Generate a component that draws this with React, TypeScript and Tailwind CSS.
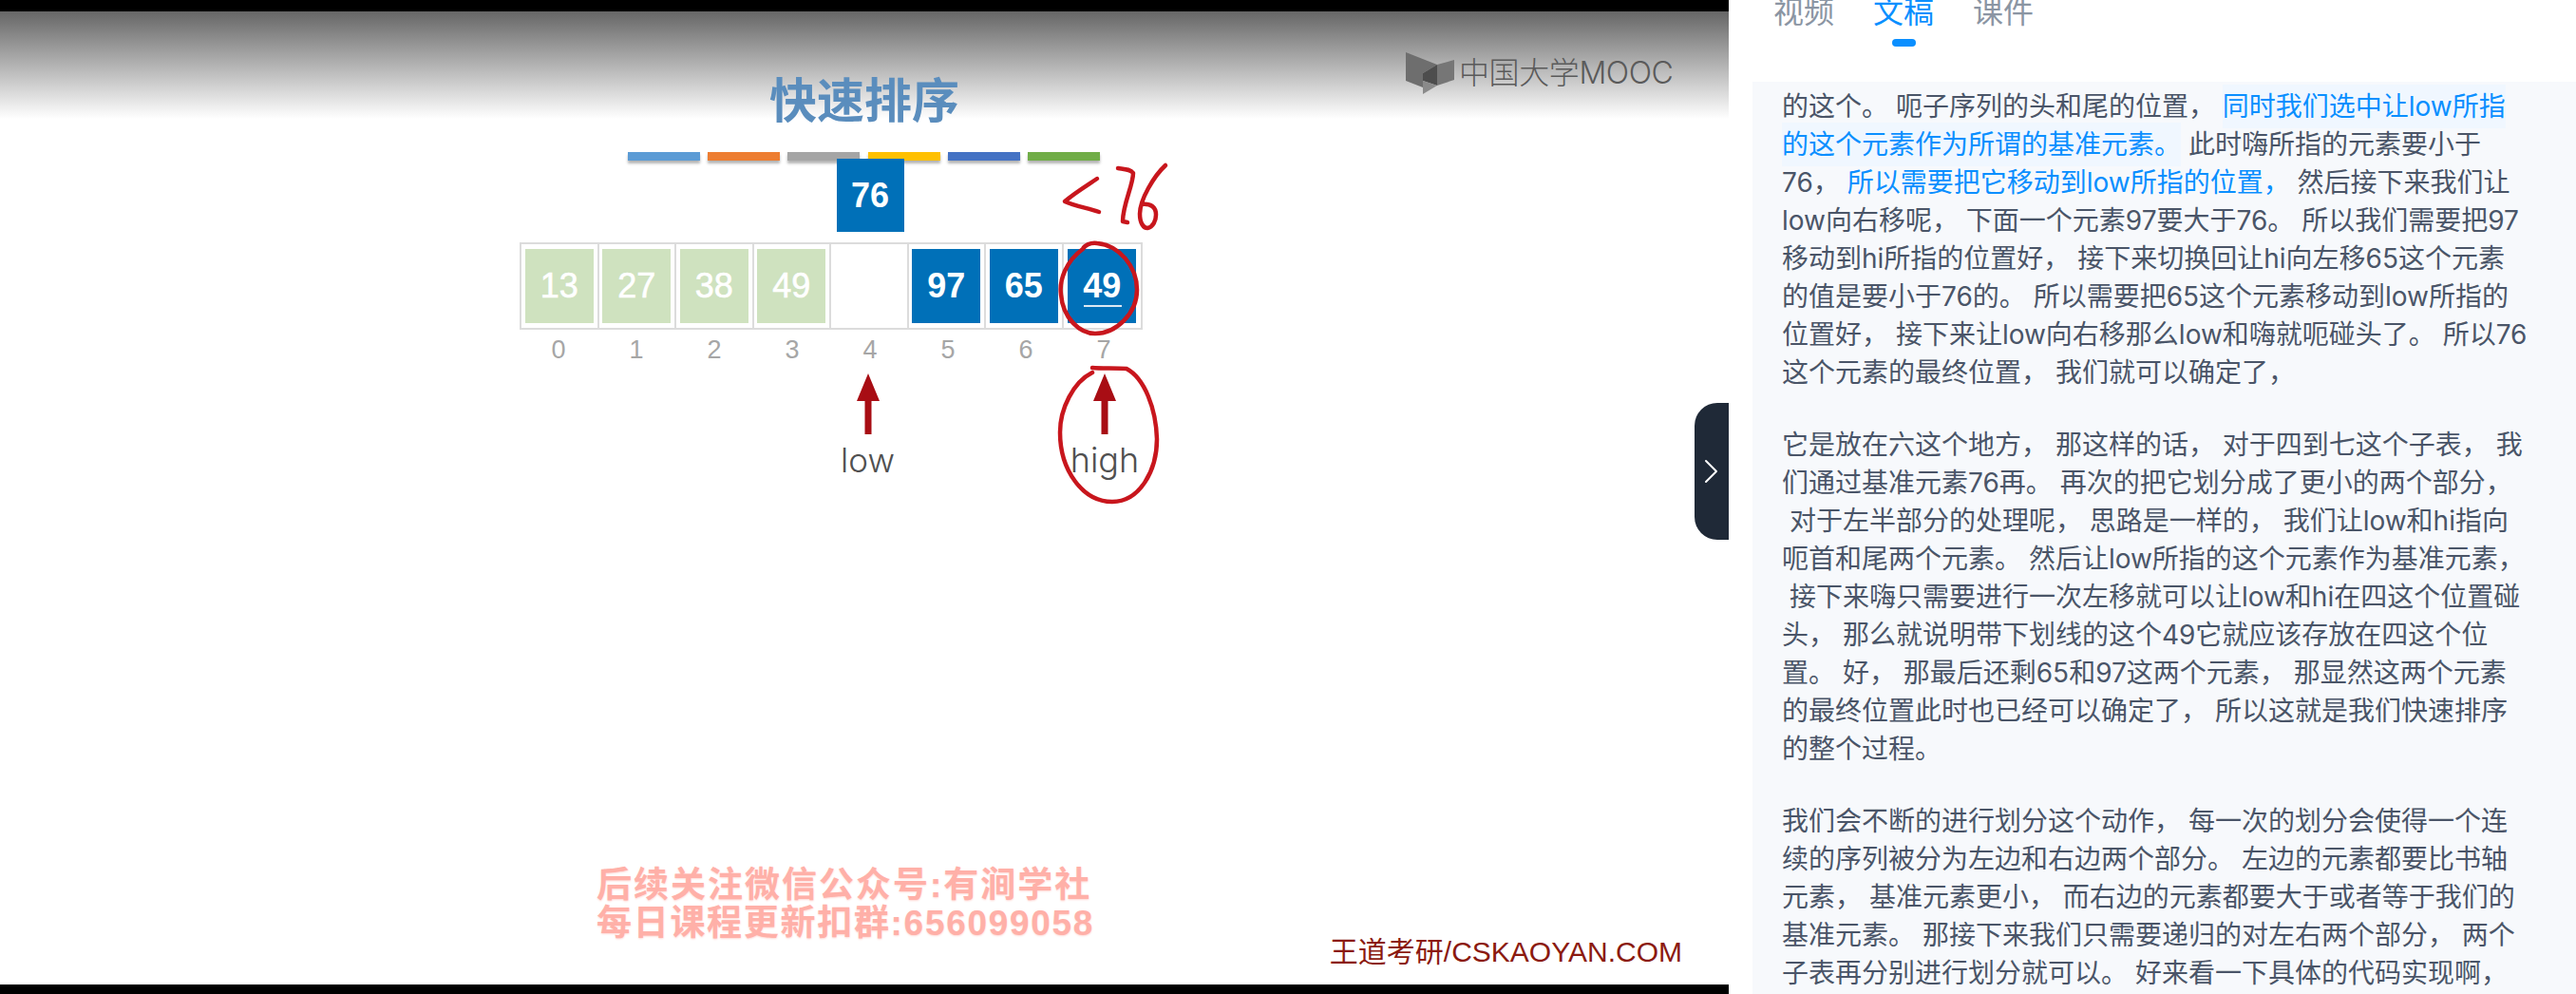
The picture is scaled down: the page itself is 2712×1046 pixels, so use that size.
const cjk = "font-['Inter','Noto_Sans_CJK_SC',sans-serif]";

const barColors = ["bg-[#5b9bd5]", "bg-[#ed7d31]", "bg-[#a5a5a5]", "bg-[#ffc000]", "bg-[#4472c4]", "bg-[#70ad47]"];

const cells = [
  { value: "13", done: true },
  { value: "27", done: true },
  { value: "38", done: true },
  { value: "49", done: true },
  { value: "", done: false },
  { value: "97", done: false },
  { value: "65", done: false },
  { value: "49", done: false, underline: true },
];

function Arrow() {
  return (
    <svg width="24" height="64" viewBox="0 0 24 64" className="block">
      <path d="M12 0 L24 29 L15.5 29 L15.5 64 L8.5 64 L8.5 29 L0 29 Z" fill="#a80d14" />
    </svg>
  );
}

function MoocLogo() {
  return (
    <div className="absolute left-[1480px] top-[43px] flex items-center gap-[2px]">
      <svg width="54" height="44" viewBox="0 0 54 44" className="block">
        <path d="M0 0 L33 13 L18 22 L18 37 L0 30 Z" fill="#6e6e6e" />
        <path d="M33 13 L51 8 L51 29 L33 35 Z" fill="#767676" />
        <path d="M18 22 L33 13 L33 35 L18 30 Z" fill="#4d4d4d" />
        <path d="M18 30 L33 35 L18 44 Z" fill="#8a8a8a" />
      </svg>
      <span className="font-['Inter','Noto_Sans_CJK_SC',sans-serif] text-[32px] leading-[36px] font-light text-[#5a5a5a] whitespace-nowrap tracking-[-0.4px]">
        中国大学MOOC
      </span>
    </div>
  );
}

function Slide() {
  return (
    <div className="relative flex flex-1 flex-col bg-[linear-gradient(#666666_0px,#ffffff_113px)] pt-[65px]">
      <MoocLogo />
      <h1 className="text-center font-['Liberation_Sans','Noto_Sans_CJK_SC',sans-serif] text-[50px] leading-[60px] font-bold text-[#5a8dbd]">
        快速排序
      </h1>

      <div className="mt-[23px] ml-[661px] flex w-[497px] justify-between">
        {barColors.map((color) => (
          <div key={color} className={`h-[9px] w-[76px] ${color} shadow-[0_3px_3px_rgba(0,0,0,0.3)]`}></div>
        ))}
      </div>

      <div className="ml-[547px] w-[656px] font-['Liberation_Sans',sans-serif]">
        <div className="relative -mt-[2px] grid grid-cols-8">
          <div className="col-start-5 flex h-[77px] w-[71px] items-center justify-center justify-self-center bg-[#0070b8] text-[36px] font-bold text-white">
            76
          </div>
        </div>

        <div className="mt-[11px] grid h-[92px] grid-cols-8 border-2 border-[#dcdcdc]">
          {cells.map((cell, i) => (
            <div key={i} className="flex items-center justify-center border-r-2 border-[#dcdcdc] last:border-r-0">
              {cell.value && (
                <div
                  className={`relative flex h-[78px] w-[72px] items-center justify-center text-[36px] text-white ${
                    cell.done ? "bg-[#cfe2bf] [-webkit-text-stroke:0.6px_white]" : "bg-[#0070b8] font-bold"
                  }`}
                >
                  {cell.value}
                  {cell.underline && <div className="absolute top-[59px] left-[17px] h-[2px] w-[40px] bg-[#dbe9f3]"></div>}
                </div>
              )}
            </div>
          ))}
        </div>

        <div className="grid h-[46px] grid-cols-8">
          {[0, 1, 2, 3, 4, 5, 6, 7].map((n) => (
            <div key={n} className="text-center text-[27px] leading-[42px] text-[#a6a6a6]">
              {n}
            </div>
          ))}
        </div>

        <div className="grid grid-cols-8">
          <div className="col-start-5 flex flex-col items-center pr-[5px]">
            <Arrow />
            <span className="mt-[5px] font-['Inter',sans-serif] text-[35px] leading-[44px] font-light text-[#505050]">low</span>
          </div>
          <div className="col-start-8 flex flex-col items-center pl-[2px]">
            <Arrow />
            <span className="mt-[5px] font-['Inter',sans-serif] text-[36px] leading-[44px] font-light text-[#505050]">high</span>
          </div>
        </div>
      </div>

      <div className="mt-auto flex items-end justify-between pr-[49px] pb-[44px] pl-[628px]">
        <div className="font-['Liberation_Sans','Noto_Sans_CJK_SC',sans-serif] text-[37px] leading-[40px] font-bold whitespace-nowrap text-[#ffb0a8] [text-shadow:0_1px_2px_#ffd8d4]">
          <div className="tracking-[2px]">后续关注微信公众号:有涧学社</div>
          <div className="tracking-[1.7px]">每日课程更新扣群:656099058</div>
        </div>
        <div className="-mb-[25px] font-['Liberation_Sans','Noto_Sans_CJK_SC',sans-serif] text-[30px] leading-[30px] whitespace-nowrap text-[#8b1a10]">
          王道考研/CSKAOYAN.COM
        </div>
      </div>

      {/* teacher's red pen strokes, coordinates are page px minus the 12px top bar */}
      <svg className="pointer-events-none absolute top-[-12px] left-0" width="1820" height="1046" viewBox="0 0 1820 1046" fill="none" stroke="#c8161d" strokeWidth="4.5" strokeLinecap="round" strokeLinejoin="round">
        <path d="M1155 188 C1143 196 1130 204 1121 212 C1132 217 1146 219 1157 223" />
        <path d="M1177 177 C1184 178 1190 178 1193 182 C1193 195 1182 215 1182 233 L1187 234" />
        <path d="M1227 174 C1215 185 1200 210 1200 225 C1200 235 1204 240 1208 240 C1214 239 1217 232 1217 226 C1217 218 1212 214 1202 215" />
        <path d="M1140 262 C1122 275 1115 295 1117 310 C1119 335 1137 351 1153 351 C1175 351 1197 330 1197 305 C1197 280 1178 258 1155 256 C1148 255 1142 258 1140 262" />
        <path d="M1150 387 C1160 388 1175 387 1186 388 C1205 398 1217 430 1218 462 C1218 495 1200 528 1171 528 C1140 528 1116 495 1116 455 C1116 430 1130 402 1150 392" />
      </svg>
    </div>
  );
}

function Tabs() {
  const tabs = ["视频", "文稿", "课件"];
  return (
    <div className="flex h-[86px] shrink-0 items-start gap-[41px] pl-[47px]">
      {tabs.map((tab) => (
        <div key={tab} className="-mt-[3px] flex flex-col items-center">
          <span className={`text-[32px] leading-[32px] ${tab === "文稿" ? "text-[#0a8fff]" : "text-[#8b95a3]"}`}>{tab}</span>
          {tab === "文稿" && <div className="mt-[12px] h-[8px] w-[25px] rounded-full bg-[#0a8fff]"></div>}
        </div>
      ))}
    </div>
  );
}

function Hl({ children, box }: { children: React.ReactNode; box?: boolean }) {
  return <span className={box ? "bg-[#f0f7ff] py-[6px] text-[#0a8fff]" : "text-[#0a8fff]"}>{children}</span>;
}

function Transcript() {
  return (
    <div className="ml-[25px] flex-1 overflow-hidden bg-[#f7f9fc] pt-[6px] pl-[31px] text-[28px] leading-[40px] whitespace-nowrap text-[#4a5568]">
      <p className="mb-[36px]">
        的这个。 呃子序列的头和尾的位置， <Hl box>同时我们选中让low所指</Hl>
        <br />
        <Hl box>的这个元素作为所谓的基准元素。</Hl> 此时嗨所指的元素要小于
        <br />
        76， <Hl>所以需要把它移动到low所指的位置，</Hl> 然后接下来我们让
        <br />
        low向右移呢， 下面一个元素97要大于76。 所以我们需要把97
        <br />
        移动到hi所指的位置好， 接下来切换回让hi向左移65这个元素
        <br />
        的值是要小于76的。 所以需要把65这个元素移动到low所指的
        <br />
        位置好， 接下来让low向右移那么low和嗨就呃碰头了。 所以76
        <br />
        这个元素的最终位置， 我们就可以确定了，
      </p>
      <p className="mb-[36px]">
        它是放在六这个地方， 那这样的话， 对于四到七这个子表， 我
        <br />
        们通过基准元素76再。 再次的把它划分成了更小的两个部分，
        <br />
        &nbsp;对于左半部分的处理呢， 思路是一样的， 我们让low和hi指向
        <br />
        呃首和尾两个元素。 然后让low所指的这个元素作为基准元素，
        <br />
        &nbsp;接下来嗨只需要进行一次左移就可以让low和hi在四这个位置碰
        <br />
        头， 那么就说明带下划线的这个49它就应该存放在四这个位
        <br />
        置。 好， 那最后还剩65和97这两个元素， 那显然这两个元素
        <br />
        的最终位置此时也已经可以确定了， 所以这就是我们快速排序
        <br />
        的整个过程。
      </p>
      <p>
        我们会不断的进行划分这个动作， 每一次的划分会使得一个连
        <br />
        续的序列被分为左边和右边两个部分。 左边的元素都要比书轴
        <br />
        元素， 基准元素更小， 而右边的元素都要大于或者等于我们的
        <br />
        基准元素。 那接下来我们只需要递归的对左右两个部分， 两个
        <br />
        子表再分别进行划分就可以。 好来看一下具体的代码实现啊，
      </p>
    </div>
  );
}

export default function App() {
  return (
    <div lang="zh-CN" className={`flex h-[1046px] w-[2712px] overflow-hidden bg-white ${cjk}`}>
      <div className="relative flex w-[1820px] shrink-0 flex-col bg-black pt-[12px] pb-[10px]">
        <Slide />
        <div className="absolute top-[424px] right-0 flex h-[144px] w-[36px] items-center justify-center rounded-l-[24px] bg-[#1f2937]">
          <svg width="16" height="26" viewBox="0 0 16 26" fill="none" stroke="#fff" strokeWidth="2" strokeLinecap="round" strokeLinejoin="round">
            <path d="M2 2 L13 13 L2 24" />
          </svg>
        </div>
      </div>
      <div className="flex min-w-0 flex-1 flex-col">
        <Tabs />
        <Transcript />
      </div>
    </div>
  );
}
